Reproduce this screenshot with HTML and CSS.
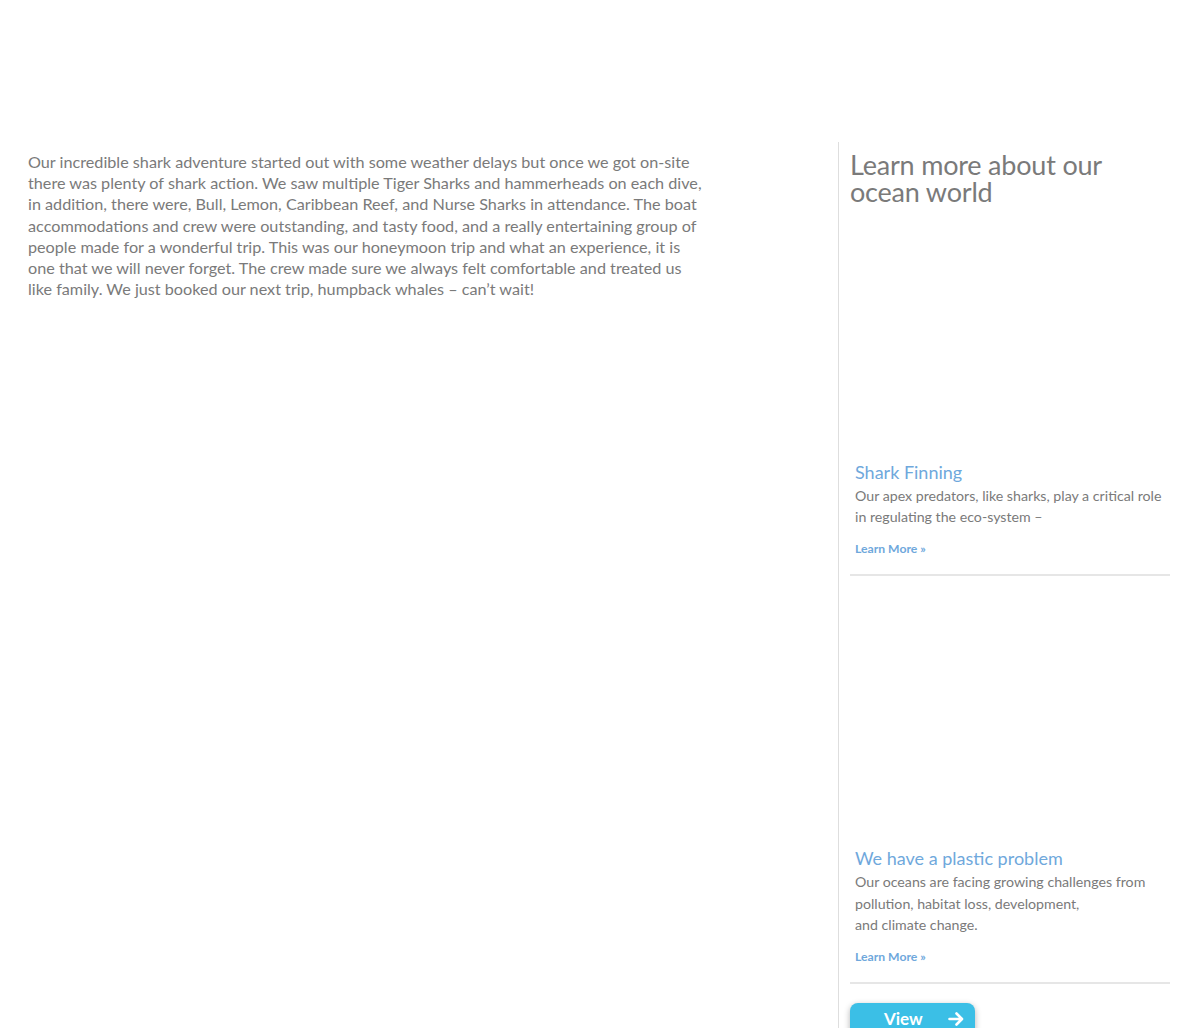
FILE: index.html
```html
<!DOCTYPE html>
<html lang="en">
<head>
<meta charset="utf-8">
<title>Shark adventure review</title>
<link rel="stylesheet" href="styles.css">
</head>
<body>
<div class="page">
  <main class="main-col">
    <p class="review">Our incredible shark adventure started out with some weather delays but once we got on-site there was plenty of shark action. We saw multiple Tiger Sharks and hammerheads on each dive, in addition, there were, Bull, Lemon, Caribbean Reef, and Nurse Sharks in attendance. The boat accommodations and crew were outstanding, and tasty food, and a really entertaining group of people made for a wonderful trip. This was our honeymoon trip and what an experience, it is one that we will never forget. The crew made sure we always felt comfortable and treated us like family. We just booked our next trip, humpback whales – can’t wait!</p>
  </main>
  <aside class="side-col">
    <h2 class="side-title">Learn more about our ocean world</h2>
    <div class="posts">
      <article class="post">
        <div class="post-thumb"></div>
        <div class="post-text">
          <h3 class="post-title">Shark Finning</h3>
          <p class="post-excerpt">Our apex predators, like sharks, play a critical role in regulating the eco-system –</p>
          <a class="post-more" href="#">Learn More »</a>
        </div>
        <div class="post-rule"></div>
      </article>
      <article class="post">
        <div class="post-thumb"></div>
        <div class="post-text">
          <h3 class="post-title">We have a plastic problem</h3>
          <p class="post-excerpt">Our oceans are facing growing challenges from pollution, habitat loss, development,<br>and climate change.</p>
          <a class="post-more" href="#">Learn More »</a>
        </div>
        <div class="post-rule"></div>
      </article>
    </div>
    <a class="view-btn" href="#"><span>View</span>
      <svg class="view-arrow" width="16" height="16" viewBox="0 0 16 16" aria-hidden="true"><path d="M1.5 8h12M8.5 2.5L14 8l-5.5 5.5" fill="none" stroke="#fff" stroke-width="2.6" stroke-linecap="round" stroke-linejoin="round"/></svg>
    </a>
  </aside>
</div>
</body>
</html>
```

FILE: styles.css
```css
html, body {
  margin: 0;
  padding: 0;
  background: #fff;
}
body {
  font-family: Lato, "Open Sans", "Liberation Sans", sans-serif;
  color: #7a7a7a;
  overflow: hidden;
  height: 1028px;
}
.page {
  display: flex;
  padding-top: 142px;
  min-height: 886px;
}
.main-col {
  width: 810px;
  padding: 9px 0 0 28px;
  flex: none;
}
.review {
  margin: 0;
  width: 676px;
  font-size: 16.2px;
  line-height: 21.2px;
  color: #7a7a7a;
}
.side-col {
  flex: none;
  width: 320px;
  border-left: 1px solid #dedede;
  padding-left: 11px;
  padding-top: 9px;
}
.side-title {
  margin: 0 0 1px;
  font-weight: 400;
  font-size: 27px;
  line-height: 27px;
  color: #7a7a7a;
  letter-spacing: -0.2px;
}
.posts {
  display: flex;
  flex-direction: column;
  gap: 16px;
}
.post-thumb {
  height: 245px;
  margin-bottom: 10px;
}
.post-text {
  padding-left: 5px;
}
.post-title {
  margin: 0;
  font-weight: 400;
  font-size: 18px;
  line-height: 23px;
  color: #6fa8dc;
}
.post-excerpt {
  margin: 1px 0 0;
  font-size: 14.2px;
  line-height: 21.2px;
  color: #7a7a7a;
}
.post-more {
  display: block;
  margin-top: 13px;
  font-size: 12.2px;
  line-height: 18px;
  font-weight: 700;
  color: #6fa8dc;
  text-decoration: none;
}
.post-rule {
  height: 2px;
  background: #e6e6e6;
  margin-top: 16px;
}
.view-btn {
  margin-top: 19px;
  width: 125px;
  height: 40px;
  box-sizing: border-box;
  display: flex;
  align-items: flex-start;
  gap: 25px;
  padding: 5px 0 0 34px;
  background: #3bbfe6;
  border-radius: 8px;
  box-shadow: 0 2px 6px rgba(0, 0, 0, 0.3);
  color: #fff;
  font-weight: 700;
  font-size: 17px;
  line-height: 22px;
  text-decoration: none;
}
.view-arrow {
  display: block;
  margin-top: 3px;
}
```
